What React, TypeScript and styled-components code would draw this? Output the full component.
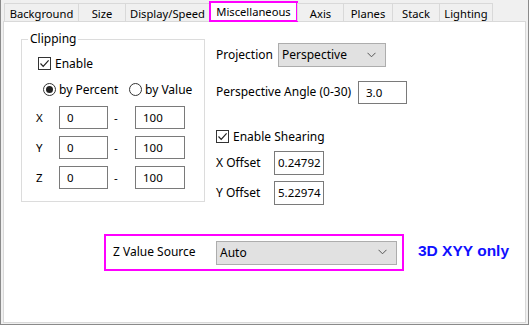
import React from 'react';
import styled, { createGlobalStyle } from 'styled-components';

const GlobalStyle = createGlobalStyle`
	html, body {
		margin: 0;
		padding: 0;
		background: #f0f0f0;
	}
	body {
		font-family: 'Segoe UI', 'Noto Sans', sans-serif;
		font-size: 11.5px;
		color: #000;
	}
	* {
		box-sizing: border-box;
	}
`;

const TABS = [
	{ label: 'Background', width: 75 },
	{ label: 'Size', width: 48 },
	{ label: 'Display/Speed', width: 85 },
	{ label: 'Miscellaneous', width: 89, active: true },
	{ label: 'Axis', width: 47 },
	{ label: 'Planes', width: 50 },
	{ label: 'Stack', width: 48 },
	{ label: 'Lighting', width: 54 },
];

const CheckIcon = () => (
	<svg width="11" height="11" viewBox="0 0 11 11">
		<path d="M1.5 5.5 L4.2 8.3 L9.6 2.4" fill="none" stroke="#222" strokeWidth="1.2" />
	</svg>
);

const Chevron = () => (
	<svg width="9" height="6" viewBox="0 0 9 6">
		<path d="M0.5 0.8 L4.5 4.8 L8.5 0.8" fill="none" stroke="#555" strokeWidth="1" />
	</svg>
);

const App: React.FC = (): JSX.Element => {
	return (
		<>
			<GlobalStyle />
			<Window>
				<TabStrip>
					{TABS.map((t) => (
						<Tab key={t.label} $width={t.width} $active={!!t.active}>
							{t.label}
						</Tab>
					))}
				</TabStrip>
				<Panel>
					<TopSection>
						<GroupBox>
							<Legend>Clipping</Legend>
							<CheckRow $indent={2} $top={9}>
								<CheckBox>
									<CheckIcon />
								</CheckBox>
								<span>Enable</span>
							</CheckRow>
							<RadioRow>
								<RadioOption $width={86}>
									<Radio $checked />
									<span>by Percent</span>
								</RadioOption>
								<RadioOption>
									<Radio />
									<span>by Value</span>
								</RadioOption>
							</RadioRow>
							{['X', 'Y', 'Z'].map((axis, i) => (
								<RangeRow key={axis} $top={i === 0 ? 10 : 7}>
									<AxisLabel>{axis}</AxisLabel>
									<TextBox $width={49} $height={23}>0</TextBox>
									<Dash>-</Dash>
									<TextBox $width={50} $height={23}>100</TextBox>
								</RangeRow>
							))}
						</GroupBox>
						<RightColumn>
							<FieldRow $height={24}>
								<FieldLabel $width={62}>Projection</FieldLabel>
								<Select $width={108} $height={24}>
									<span>Perspective</span>
									<Chevron />
								</Select>
							</FieldRow>
							<FieldRow $height={23} $top={14}>
								<FieldLabel $width={142}>Perspective Angle (0-30)</FieldLabel>
								<TextBox $width={49} $height={23}>3.0</TextBox>
							</FieldRow>
							<CheckRow $indent={0} $top={25}>
								<CheckBox>
									<CheckIcon />
								</CheckBox>
								<span>Enable Shearing</span>
							</CheckRow>
							<FieldRow $height={24} $top={8}>
								<FieldLabel $width={58}>X Offset</FieldLabel>
								<TextBox $width={50} $height={24} $pad={3}>0.24792</TextBox>
							</FieldRow>
							<FieldRow $height={24} $top={6}>
								<FieldLabel $width={58}>Y Offset</FieldLabel>
								<TextBox $width={50} $height={24} $pad={3}>5.22974</TextBox>
							</FieldRow>
						</RightColumn>
					</TopSection>
					<BottomRow>
						<Highlight>
							<FieldLabel $width={103}>Z Value Source</FieldLabel>
							<Select $width={181} $height={24}>
								<span>Auto</span>
								<Chevron />
							</Select>
						</Highlight>
						<Note>3D XYY only</Note>
					</BottomRow>
				</Panel>
			</Window>
		</>
	);
};

const Window = styled.div`
	width: 529px;
	height: 325px;
	background: #f0f0f0;
	border-left: 1px solid #8a8a8a;
	border-right: 1px solid #8a8a8a;
	border-bottom: 1px solid #8a8a8a;
	padding: 0 2px 1px 1px;
	display: flex;
	flex-direction: column;
`;

const TabStrip = styled.div`
	height: 21px;
	display: flex;
	align-items: flex-end;
	padding-left: 2px;
	position: relative;
	z-index: 1;
	font-size: 11.2px;
`;

const Tab = styled.div<{ $width: number; $active: boolean }>`
	width: ${(p) => p.$width}px;
	height: ${(p) => (p.$active ? 21 : 18)}px;
	margin-left: -1px;
	margin-bottom: ${(p) => (p.$active ? -1 : 0)}px;
	display: flex;
	align-items: center;
	justify-content: center;
	background: ${(p) => (p.$active ? '#fff' : '#f0f0f0')};
	border: ${(p) => (p.$active ? '2px solid #ff00ff' : '1px solid #d9d9d9')};
	border-bottom: ${(p) => (p.$active ? '2px solid #ff00ff' : 'none')};
	padding-top: ${(p) => (p.$active ? 0 : 1)}px;
	white-space: nowrap;
	&:first-child {
		margin-left: 0;
	}
`;

const Panel = styled.div`
	flex: 1;
	margin-left: 1px;
	background: #fff;
	border: 1px solid #d9d9d9;
	display: flex;
	flex-direction: column;
`;

const TopSection = styled.div`
	display: flex;
	padding: 17px 0 0 17px;
`;

const GroupBox = styled.div`
	width: 184px;
	height: 163px;
	border: 1px solid #dcdcdc;
	padding: 0 0 0 14px;
	display: flex;
	flex-direction: column;
`;

const Legend = styled.span`
	align-self: flex-start;
	margin: -9px 0 0 -8px;
	padding: 0 2px;
	background: #fff;
	line-height: 16px;
	font-size: 12px;
`;

const CheckRow = styled.div<{ $indent: number; $top?: number }>`
	display: flex;
	align-items: center;
	gap: 4px;
	height: 14px;
	margin-left: ${(p) => p.$indent}px;
	margin-top: ${(p) => p.$top ?? 1}px;
	font-size: 12px;
`;

const CheckBox = styled.div`
	width: 13px;
	height: 13px;
	border: 1px solid #333;
	background: #fff;
	display: flex;
	align-items: center;
	justify-content: center;
`;

const RadioRow = styled.div`
	display: flex;
	margin: 12px 0 0 7px;
	height: 14px;
`;

const RadioOption = styled.div<{ $width?: number }>`
	display: flex;
	align-items: center;
	gap: 3px;
	width: ${(p) => (p.$width ? `${p.$width}px` : 'auto')};
	font-size: 12px;
	white-space: nowrap;
`;

const Radio = styled.div<{ $checked?: boolean }>`
	width: 13px;
	height: 13px;
	border-radius: 50%;
	border: 1px solid #333;
	display: flex;
	align-items: center;
	justify-content: center;
	&::after {
		content: '';
		width: 7px;
		height: 7px;
		border-radius: 50%;
		background: ${(p) => (p.$checked ? '#222' : 'transparent')};
	}
`;

const RangeRow = styled.div<{ $top: number }>`
	display: flex;
	align-items: center;
	margin-top: ${(p) => p.$top}px;
`;

const AxisLabel = styled.span`
	width: 23px;
	padding-bottom: 1px;
`;

const Dash = styled.span`
	width: 27px;
	padding-left: 6px;
`;

const TextBox = styled.div<{ $width: number; $height: number; $pad?: number }>`
	width: ${(p) => p.$width}px;
	height: ${(p) => p.$height}px;
	border: 1px solid #7a7a7a;
	background: #fff;
	padding-left: ${(p) => p.$pad ?? 7}px;
	padding-bottom: 1px;
	display: flex;
	align-items: center;
	white-space: nowrap;
	overflow: hidden;
`;

const RightColumn = styled.div`
	display: flex;
	flex-direction: column;
	margin: 4px 0 0 11px;
`;

const FieldRow = styled.div<{ $height: number; $top?: number }>`
	display: flex;
	align-items: center;
	height: ${(p) => p.$height}px;
	margin-top: ${(p) => p.$top ?? 0}px;
`;

const FieldLabel = styled.span<{ $width: number }>`
	width: ${(p) => p.$width}px;
	font-size: 12px;
	white-space: nowrap;
	padding-bottom: 2px;
`;

const Select = styled.div<{ $width: number; $height: number }>`
	width: ${(p) => p.$width}px;
	height: ${(p) => p.$height}px;
	background: #e1e1e1;
	border: 1px solid #adadad;
	display: flex;
	align-items: center;
	justify-content: space-between;
	padding: 0 9px 1px 3px;
	font-size: 12px;
`;

const BottomRow = styled.div`
	display: flex;
	align-items: center;
	margin: 29px 0 0 100px;
`;

const Highlight = styled.div`
	width: 300px;
	height: 37px;
	border: 2px solid #ff00ff;
	display: flex;
	align-items: center;
	padding: 0 0 0 7px;
`;

const Note = styled.span`
	margin-left: 14px;
	font-family: 'Liberation Sans', Arial, sans-serif;
	font-weight: bold;
	font-size: 15.5px;
	color: #1010ff;
	padding-bottom: 3px;
`;

export default App;
